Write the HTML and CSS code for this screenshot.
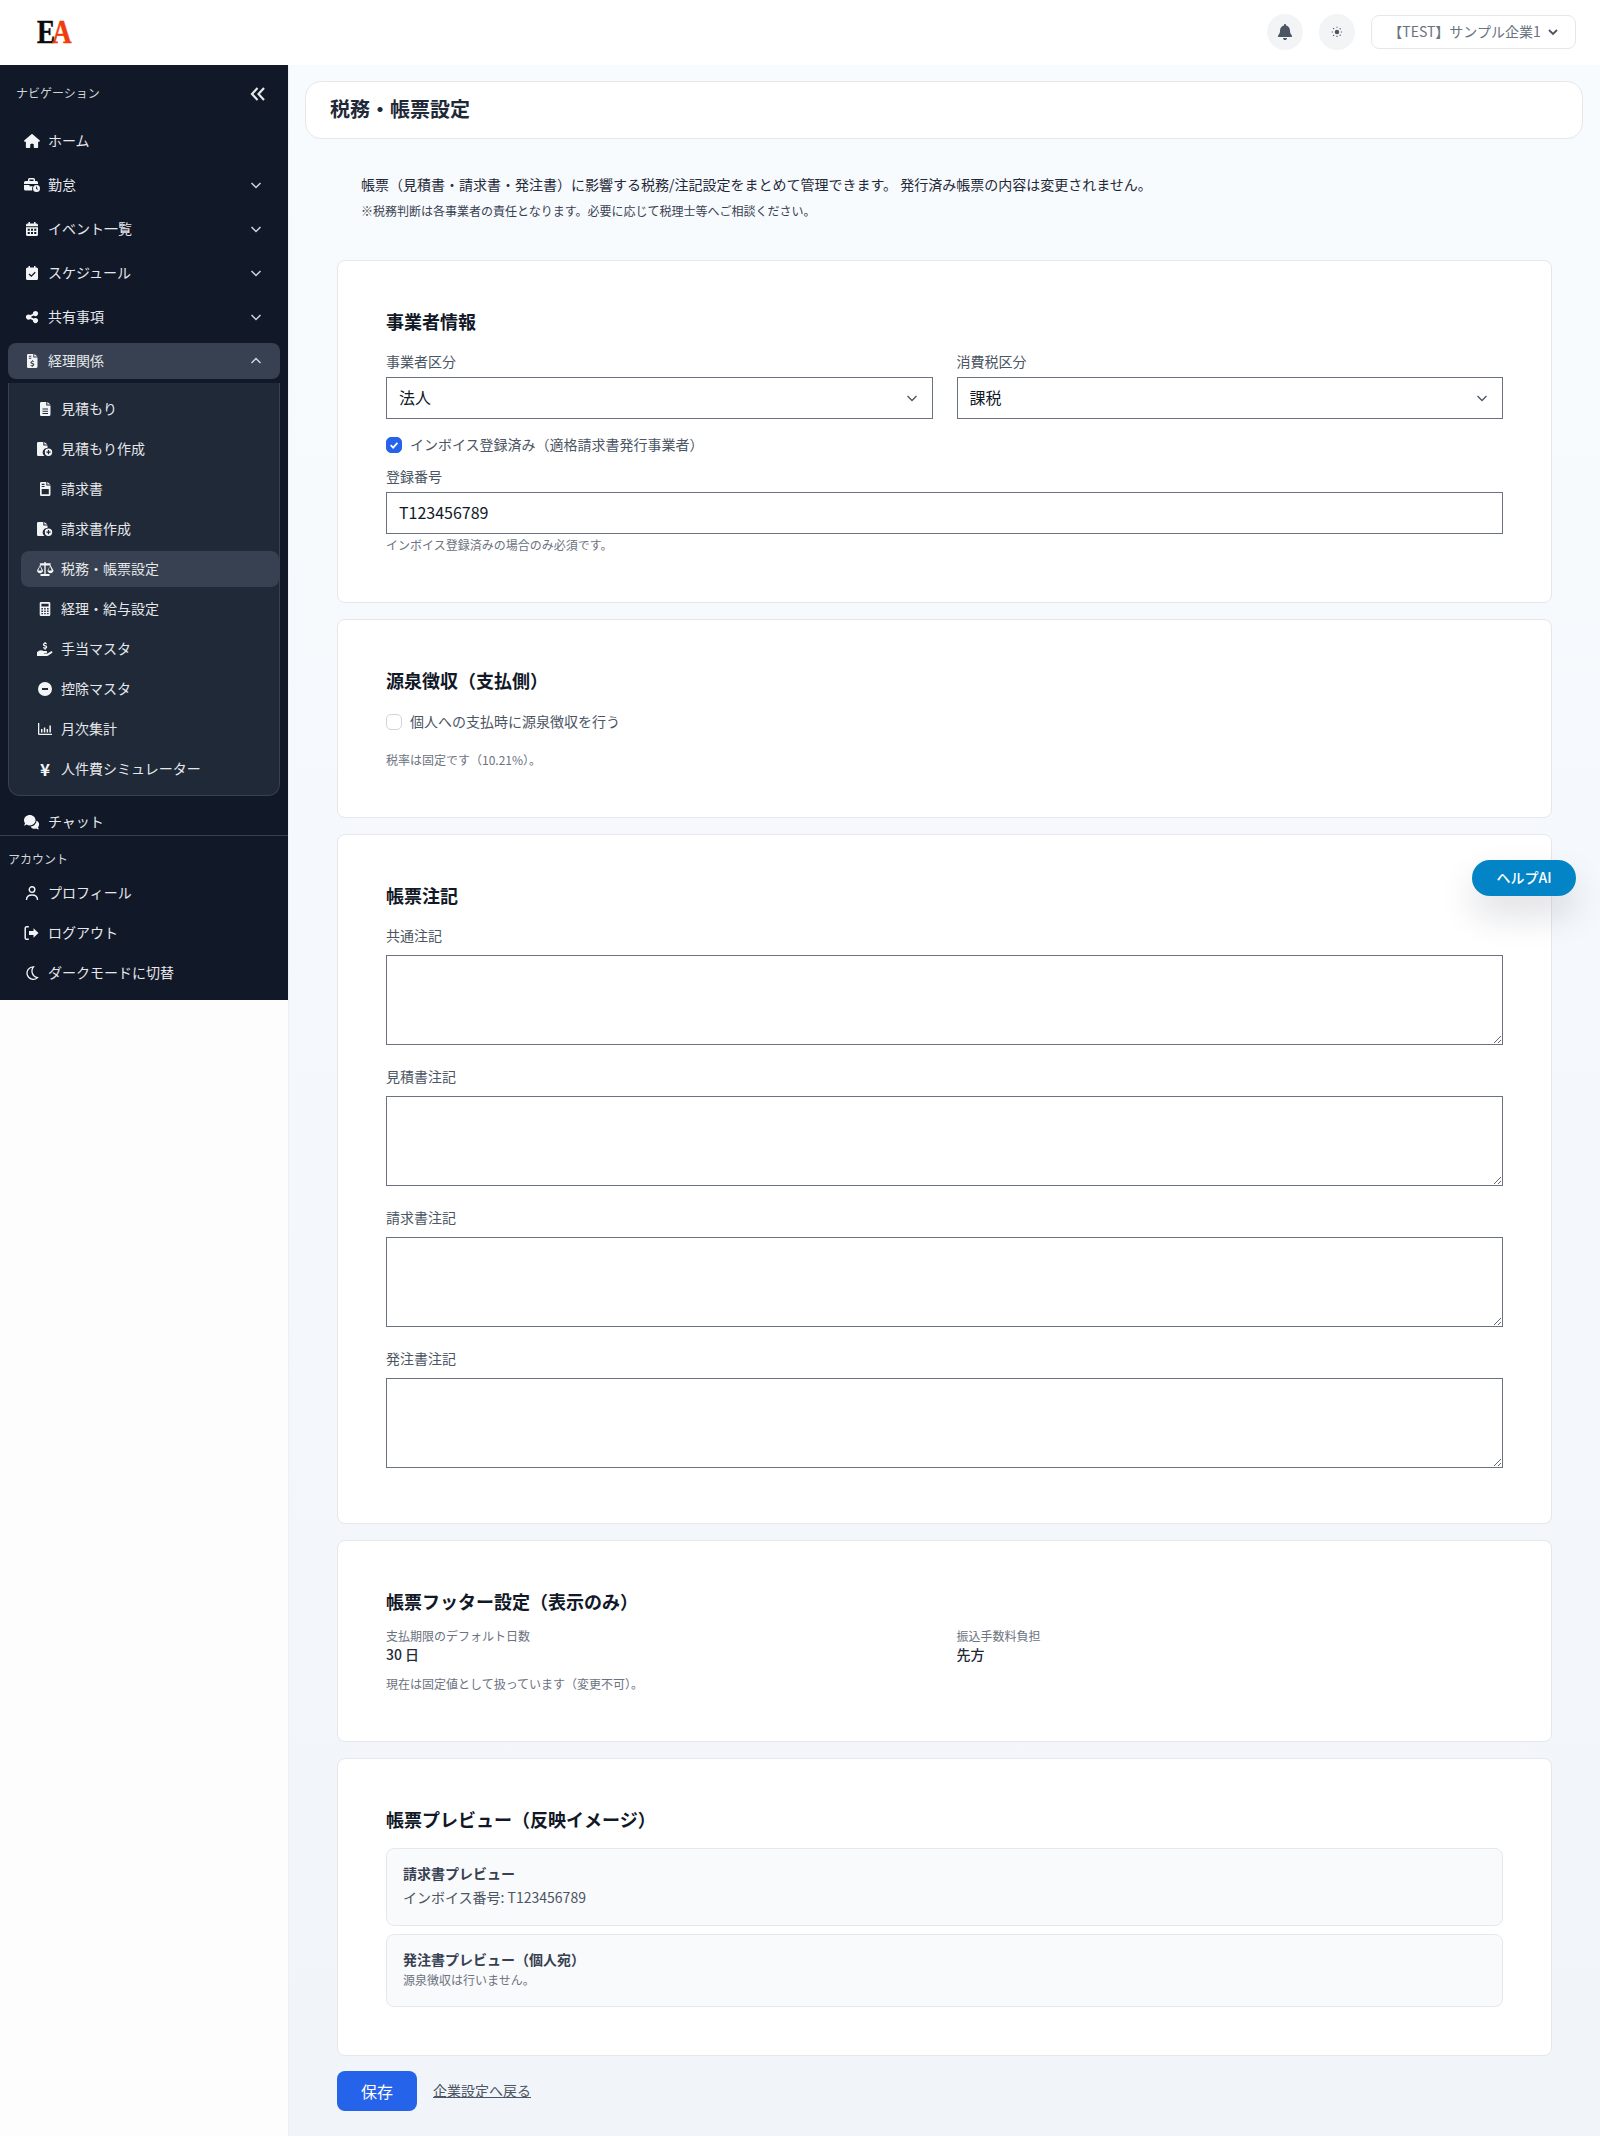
FILE: index.html
```html
<!DOCTYPE html>
<html lang="ja">
<head>
<meta charset="utf-8">
<title>税務・帳票設定</title>
<link rel="stylesheet" href="styles.css">
</head>
<body>
<svg class="defs" width="0" height="0" aria-hidden="true">
  <symbol id="i-house" viewBox="0 0 576 512"><path d="M575.8 255.5c0 18-15 32.1-32 32.1h-32l.7 160.2c0 2.7-.2 5.4-.5 8.1V472c0 22.1-17.9 40-40 40H456c-1.1 0-2.2 0-3.3-.1c-1.4 .1-2.8 .1-4.2 .1H416 392c-22.1 0-40-17.9-40-40V448 384c0-17.7-14.3-32-32-32H256c-17.7 0-32 14.3-32 32v64 24c0 22.1-17.9 40-40 40H160 128.1c-1.5 0-3-.1-4.5-.2c-1.2 .1-2.4 .2-3.6 .2H104c-22.1 0-40-17.9-40-40V360c0-.9 0-1.9 .1-2.8V287.6H32c-18 0-32-14-32-32.1c0-9 3-17 10-24L266.4 8c7-7 15-8 22-8s15 2 21 7L564.8 231.5c8 7 12 15 11 24z"/></symbol>
  <symbol id="i-bell" viewBox="0 0 448 512"><path d="M224 0c-17.7 0-32 14.3-32 32V51.2C119 66 64 130.6 64 208v18.8c0 47-17.3 92.4-48.5 127.6l-7.4 8.3c-8.4 9.4-10.4 22.9-5.3 34.4S19.4 416 32 416H416c12.6 0 24-7.4 29.2-18.9s3.1-25-5.3-34.4l-7.4-8.3C401.3 319.2 384 273.9 384 226.8V208c0-77.4-55-142-128-156.8V32c0-17.7-14.3-32-32-32zm45.3 493.3c12-12 18.7-28.3 18.7-45.3H224 160c0 17 6.7 33.3 18.7 45.3s28.3 18.7 45.3 18.7s33.3-6.7 45.3-18.7z"/></symbol>
  <symbol id="i-share" viewBox="0 0 448 512"><path d="M352 224c53 0 96-43 96-96s-43-96-96-96s-96 43-96 96c0 4 .2 8 .7 11.9l-94.1 47C145.4 170.2 121.9 160 96 160c-53 0-96 43-96 96s43 96 96 96c25.9 0 49.4-10.2 66.6-26.9l94.1 47c-.5 3.9-.7 7.8-.7 11.9c0 53 43 96 96 96s96-43 96-96s-43-96-96-96c-25.9 0-49.4 10.2-66.6 26.9l-94.1-47c.5-3.9 .7-7.8 .7-11.9s-.2-8-.7-11.9l94.1-47C302.6 213.8 326.1 224 352 224z"/></symbol>
  <symbol id="i-brief" viewBox="0 0 16 14"><path fill-rule="evenodd" d="M5.500 0h4A1.500 1.500 0 0 1 11 1.500V3h1.500A1.500 1.500 0 0 1 14 4.500V6H0V4.500A1.500 1.500 0 0 1 1.500 3H4V1.500A1.500 1.500 0 0 1 5.500 0zM5.500 1.500V3h4V1.500zM0 7h5.500v1.200h3.300A4.500 4.500 0 0 0 8.300 12.500H1.500A1.500 1.500 0 0 1 0 11z"/><path fill-rule="evenodd" d="M12.500 7a3.500 3.500 0 1 1 0 7 3.500 3.500 0 0 1 0-7zm-.5 1.500v2.200l1.600 1 .5-.7-1.200-.8V8.500z"/></symbol>
  <symbol id="i-cal" viewBox="0 0 16 14"><g transform="translate(2 0)"><path fill-rule="evenodd" d="M2.500 0h1.500v1.500h4V0h1.500v1.500h1A1.500 1.500 0 0 1 12 3v1.300H0V3a1.500 1.500 0 0 1 1.500-1.500h1zM0 5.300h12v7.200A1.500 1.500 0 0 1 10.500 14h-9A1.500 1.500 0 0 1 0 12.500zM1.700 6.800v1.900h2.100V6.800zm3.300 0v1.900h2V6.800zm3.200 0v1.900h2.100V6.800zM1.700 10v1.900h2.100V10zm3.300 0v1.900h2V10zm3.200 0v1.900h2.100V10z"/></g></symbol>
  <symbol id="i-calc" viewBox="0 0 16 14"><g transform="translate(2 0)"><path fill-rule="evenodd" d="M2.500 0h1.500v1.500h4V0h1.500v1.500h1A1.500 1.500 0 0 1 12 3v9.500a1.500 1.500 0 0 1-1.500 1.500h-9A1.500 1.500 0 0 1 0 12.500V3a1.500 1.500 0 0 1 1.500-1.500h1zM8.800 5.800 5.300 9.300 3.500 7.500l-.9.900 2.700 2.700 4.400-4.400z"/></g></symbol>
  <symbol id="i-filedollar" viewBox="0 0 16 14"><g transform="translate(3 0)"><path fill-rule="evenodd" d="M1.300 0H6.300v3.500h4.200v9A1.500 1.500 0 0 1 9 14H1.300A1.300 1.300 0 0 1 0 12.700V1.300A1.300 1.300 0 0 1 1.300 0zM7.300 0l3.200 2.600H7.300zM1.800 1.800v1h2.500v-1zM1.800 3.800v1h2.500v-1zM5.200 6v.9c-1.100.2-1.700.9-1.700 1.700 0 1 .8 1.300 1.700 1.600.7.200 1 .3 1 .6 0 .3-.4.5-1 .5-.5 0-1-.2-1.500-.4l-.3.900c.4.300.9.400 1.400.5v.8h.9v-.8c1-.2 1.600-.9 1.600-1.700 0-1-.8-1.400-1.700-1.700-.7-.2-1-.3-1-.6 0-.3.300-.5.900-.5.400 0 .9.100 1.200.3l.3-.9c-.3-.2-.7-.3-1.100-.3V6z"/></g></symbol>
  <symbol id="i-filelines" viewBox="0 0 16 14"><g transform="translate(3 0)"><path fill-rule="evenodd" d="M1.300 0H6.300v3.500h4.200v9A1.500 1.500 0 0 1 9 14H1.300A1.300 1.300 0 0 1 0 12.700V1.300A1.300 1.300 0 0 1 1.300 0zM7.300 0l3.200 2.600H7.300zM2.500 6.400v1h5.500v-1zm0 2.300v1h5.500v-1zm0 2.300v1h5.500v-1z"/></g></symbol>
  <symbol id="i-fileplus" viewBox="0 0 16 14"><path d="M1.300 0H6.300v3.500h4.200v2.400A4.500 4.500 0 0 0 7.500 14H1.300A1.300 1.300 0 0 1 0 12.700V1.300A1.300 1.300 0 0 1 1.300 0zM7.300 0l3.200 2.600H7.300z"/><path fill-rule="evenodd" d="M11.500 6.500a3.700 3.700 0 1 1 0 7.400 3.700 3.700 0 0 1 0-7.400zm-.6 1.600v1.500H9.400v1.200h1.500v1.500h1.200v-1.500h1.500V9.600h-1.500V8.100z"/></symbol>
  <symbol id="i-fileinv" viewBox="0 0 16 14"><g transform="translate(3 0)"><path fill-rule="evenodd" d="M1.300 0H6.300v3.500h4.200v9A1.500 1.500 0 0 1 9 14H1.300A1.300 1.300 0 0 1 0 12.700V1.300A1.300 1.300 0 0 1 1.300 0zM7.300 0l3.200 2.600H7.300zM1.700 7v5.300h7.100V7zM1.700 1.800v1.100h2.800V1.800zM1.700 3.900v1.100h2.800V3.900z"/></g></symbol>
  <symbol id="i-scale" viewBox="0 0 18 14"><path fill-rule="evenodd" d="M8.300 0h1.400v1.300h5v1.100h-.5l3.300 6.200c0 1.400-1.300 2.600-3 2.600s-3-1.200-3-2.600l2.600-5.200H9.700V12H13.500v2h-9v-2h3.800V3.400H4.400L7 8.600c0 1.400-1.300 2.600-3 2.600s-3-1.200-3-2.600l3.300-6.200h-.5V1.300h4.500zM4 4.200 2.200 8.400h3.600zm10 0-1.800 4.200h3.600z"/></symbol>
  <symbol id="i-calculator" viewBox="0 0 16 14"><g transform="translate(2.700 0)"><path fill-rule="evenodd" d="M1.300 0h8A1.300 1.300 0 0 1 10.600 1.300v11.400A1.300 1.300 0 0 1 9.300 14h-8A1.300 1.300 0 0 1 0 12.700V1.300A1.300 1.300 0 0 1 1.300 0zM1.700 1.800v2.700h7.200V1.800zm0 4.200v1.400h1.500V6zm2.800 0v1.400h1.500V6zm2.900 0v1.400h1.500V6zM1.700 8.500v1.400h1.500V8.500zm2.800 0v1.400h1.500V8.500zm2.900 0v1.400h1.500V8.500zM1.700 11v1.300h1.500V11zm2.800 0v1.300h1.500V11zm2.900 0v1.300h1.500V11z"/></g></symbol>
  <symbol id="i-hand" viewBox="0 0 16 14"><path d="M7.500 0h1.200v1c.5.100 1 .2 1.400.5l-.5 1c-.4-.3-1-.4-1.500-.4-.6 0-.9.200-.9.500 0 .4.300.5 1.100.7 1 .3 1.900.6 1.900 1.700 0 .9-.6 1.500-1.500 1.700v1H7.500V6.700c-.6-.1-1.100-.3-1.500-.6l.5-1c.4.300 1 .5 1.500.5.600 0 .9-.2.900-.5 0-.4-.3-.5-1.100-.7-1-.3-1.900-.6-1.900-1.600 0-.9.600-1.500 1.600-1.700z"/><path d="M0 10.200c1.300-1.300 2.600-2 4-2 .9 0 1.800.3 2.600.7h2.500c.6 0 1 .4 1 1s-.4 1-1 1H7v.7h3.500l3.300-2.200c.5-.3 1.100-.2 1.500.3.300.4.200 1-.3 1.400l-3.700 2.500c-.4.300-.8.400-1.300.4H0z"/></symbol>
  <symbol id="i-minus" viewBox="0 0 14 14"><path fill-rule="evenodd" d="M7 0a7 7 0 1 1 0 14A7 7 0 0 1 7 0zM4 6v2h6V6z"/></symbol>
  <symbol id="i-chart" viewBox="0 0 14 14"><path d="M0 1h1.300v10.700H14V13H1.300A1.300 1.300 0 0 1 0 11.700zM3 7h1.500v3.500H3zM5.800 5.500h1.500v5H5.800zM8.600 7h1.500v3.500H8.600zM11.400 3.500h1.500v7h-1.500z"/></symbol>
  <symbol id="i-chat" viewBox="0 0 18 14" preserveAspectRatio="none"><path d="M6.500 0C2.900 0 0 2.200 0 5c0 1.100.5 2.100 1.200 3-.3.700-.8 1.300-1.200 1.700 1.100 0 2.200-.3 2.900-.8 1 .5 2.200.8 3.600.8 3.600 0 6.500-2.200 6.500-4.800C13 2.200 10.100 0 6.500 0z"/><path d="M14 5.300c-.2 2.900-3 5.100-6.600 5.400.9 1.300 2.500 2.200 4.400 2.200.8 0 1.500-.1 2.100-.4.700.5 1.700.9 3 .9-.4-.5-.9-1.100-1.200-1.800.8-.8 1.300-1.800 1.300-2.900 0-1.600-1.100-2.900-3-3.400z"/></symbol>
  <symbol id="i-logout" viewBox="0 0 16 14"><path d="M4.800 .8H2.500A1.300 1.300 0 0 0 1.200 2.100v9.800a1.300 1.300 0 0 0 1.300 1.300h2.300" fill="none" stroke="currentColor" stroke-width="1.500"/><path d="M9.500 2.300 14.500 7 9.500 11.700V9H5V5h4.500z"/></symbol>
  <symbol id="i-user" viewBox="0 0 16 14"><circle cx="8" cy="3.600" r="2.800" fill="none" stroke="currentColor" stroke-width="1.400"/><path d="M2.500 14c0-3.200 2.300-5 5.500-5s5.500 1.800 5.500 5" fill="none" stroke="currentColor" stroke-width="1.400"/></symbol>
  <symbol id="i-moon" viewBox="0 0 16 14"><path d="M9.500 .9A6.200 6.200 0 1 0 13.500 11.600 6.600 6.600 0 0 1 9.500 .9z" fill="none" stroke="currentColor" stroke-width="1.300"/></symbol>
</svg>

<header class="topbar">
  <div class="logo"><span class="logo-e">E</span><span class="logo-a">A</span></div>
  <div class="top-actions">
    <button class="round-btn" type="button"><svg class="ic-bell"><use href="#i-bell"/></svg></button>
    <button class="round-btn" type="button">
      <svg class="ic-sun" viewBox="0 0 14 14"><circle cx="7" cy="7" r="2.600" fill="currentColor"/><path d="M7 .8v1.700M7 11.500v1.700M.8 7h1.700M11.500 7h1.700M2.600 2.600l1.200 1.200M10.200 10.200l1.200 1.200M2.600 11.400l1.200-1.200M10.200 3.800l1.200-1.200" stroke="currentColor" stroke-width="1.300" stroke-dasharray="1.300 .6" fill="none"/></svg>
    </button>
    <button class="company-btn" type="button"><span class="t">【TEST】サンプル企業1</span><svg class="ic-tiny" viewBox="0 0 12 12"><path d="M2 4l4 4 4-4" fill="none" stroke="currentColor" stroke-width="1.800"/></svg></button>
  </div>
</header>

<div class="shell">
  <div class="side-col">
    <aside class="sidebar">
      <div class="nav-area">
        <div class="nav-head">
          <span class="t-small">ナビゲーション</span>
          <svg class="ic-collapse" viewBox="0 0 16 16"><path d="M7.500 2 2 8l5.500 6M14 2 8.500 8l5.500 6" fill="none" stroke="currentColor" stroke-width="2.200"/></svg>
        </div>
        <ul class="nav-list">
          <li class="nav-item"><svg class="ic"><use href="#i-house"/></svg><span class="t">ホーム</span></li>
          <li class="nav-item"><svg class="ic"><use href="#i-brief"/></svg><span class="t">勤怠</span><svg class="chev" viewBox="0 0 12 12"><path d="M1.500 4 6 8.500 10.500 4"/></svg></li>
          <li class="nav-item"><svg class="ic"><use href="#i-cal"/></svg><span class="t">イベント一覧</span><svg class="chev" viewBox="0 0 12 12"><path d="M1.500 4 6 8.500 10.500 4"/></svg></li>
          <li class="nav-item"><svg class="ic"><use href="#i-calc"/></svg><span class="t">スケジュール</span><svg class="chev" viewBox="0 0 12 12"><path d="M1.500 4 6 8.500 10.500 4"/></svg></li>
          <li class="nav-item"><svg class="ic"><use href="#i-share"/></svg><span class="t">共有事項</span><svg class="chev" viewBox="0 0 12 12"><path d="M1.500 4 6 8.500 10.500 4"/></svg></li>
          <li class="nav-item is-open"><svg class="ic"><use href="#i-filedollar"/></svg><span class="t">経理関係</span><svg class="chev" viewBox="0 0 12 12"><path d="M1.500 8 6 3.500 10.500 8"/></svg></li>
          <li class="sub-panel">
            <ul class="sub-list">
              <li class="sub-item"><svg class="ic"><use href="#i-filelines"/></svg><span class="t">見積もり</span></li>
              <li class="sub-item"><svg class="ic"><use href="#i-fileplus"/></svg><span class="t">見積もり作成</span></li>
              <li class="sub-item"><svg class="ic"><use href="#i-fileinv"/></svg><span class="t">請求書</span></li>
              <li class="sub-item"><svg class="ic"><use href="#i-fileplus"/></svg><span class="t">請求書作成</span></li>
              <li class="sub-item is-active"><svg class="ic ic-wide"><use href="#i-scale"/></svg><span class="t">税務・帳票設定</span></li>
              <li class="sub-item"><svg class="ic"><use href="#i-calculator"/></svg><span class="t">経理・給与設定</span></li>
              <li class="sub-item"><svg class="ic"><use href="#i-hand"/></svg><span class="t">手当マスタ</span></li>
              <li class="sub-item"><svg class="ic"><use href="#i-minus"/></svg><span class="t">控除マスタ</span></li>
              <li class="sub-item"><svg class="ic"><use href="#i-chart"/></svg><span class="t">月次集計</span></li>
              <li class="sub-item"><span class="ic-yen">¥</span><span class="t">人件費シミュレーター</span></li>
            </ul>
          </li>
          <li class="nav-item"><svg class="ic ic-chat"><use href="#i-chat"/></svg><span class="t">チャット</span></li>
        </ul>
      </div>
      <div class="account">
        <div class="account-label t-small">アカウント</div>
        <ul class="account-list">
          <li class="acc-item"><svg class="ic"><use href="#i-user"/></svg><span class="t">プロフィール</span></li>
          <li class="acc-item"><svg class="ic"><use href="#i-logout"/></svg><span class="t">ログアウト</span></li>
          <li class="acc-item"><svg class="ic"><use href="#i-moon"/></svg><span class="t">ダークモードに切替</span></li>
        </ul>
      </div>
    </aside>
  </div>

  <main class="main">
    <div class="title-card"><h1>税務・帳票設定</h1></div>
    <div class="content">
      <div class="intro">
        <p class="intro-main t">帳票（見積書・請求書・発注書）に影響する税務/注記設定をまとめて管理できます。 発行済み帳票の内容は変更されません。</p>
        <p class="intro-sub t-small">※税務判断は各事業者の責任となります。必要に応じて税理士等へご相談ください。</p>
      </div>

      <section class="card">
        <h2>事業者情報</h2>
        <div class="two-col">
          <div>
            <label class="field-label t">事業者区分</label>
            <div class="select-wrap">
              <select class="control"><option>法人</option></select>
              <svg class="select-arrow" viewBox="0 0 12 12"><path d="M1.500 4 6 8.500 10.500 4"/></svg>
            </div>
          </div>
          <div>
            <label class="field-label t">消費税区分</label>
            <div class="select-wrap">
              <select class="control"><option>課税</option></select>
              <svg class="select-arrow" viewBox="0 0 12 12"><path d="M1.500 4 6 8.500 10.500 4"/></svg>
            </div>
          </div>
        </div>
        <div class="check-row check-row-a">
          <span class="check is-checked"><svg viewBox="0 0 16 16"><path d="M4.200 8.200 7 11l4.900-5.400" fill="none" stroke="#fff" stroke-width="2"/></svg></span>
          <span class="t">インボイス登録済み（適格請求書発行事業者）</span>
        </div>
        <label class="field-label-reg t">登録番号</label>
        <input class="control" type="text" value="T123456789">
        <p class="hint hint-reg t-small">インボイス登録済みの場合のみ必須です。</p>
      </section>

      <section class="card">
        <h2>源泉徴収（支払側）</h2>
        <div class="check-row">
          <span class="check"></span>
          <span class="t">個人への支払時に源泉徴収を行う</span>
        </div>
        <p class="hint hint-tax t-small">税率は固定です（10.21%）。</p>
      </section>

      <section class="card">
        <h2>帳票注記</h2>
        <div class="notes">
          <div><label class="field-label-note t">共通注記</label><textarea class="note"></textarea></div>
          <div><label class="field-label-note t">見積書注記</label><textarea class="note"></textarea></div>
          <div><label class="field-label-note t">請求書注記</label><textarea class="note"></textarea></div>
          <div><label class="field-label-note t">発注書注記</label><textarea class="note"></textarea></div>
        </div>
      </section>

      <section class="card">
        <h2 class="h2-footer">帳票フッター設定（表示のみ）</h2>
        <div class="two-col">
          <div><div class="meta-label t-small">支払期限のデフォルト日数</div><div class="meta-value t">30 日</div></div>
          <div><div class="meta-label t-small">振込手数料負担</div><div class="meta-value t">先方</div></div>
        </div>
        <p class="hint hint-footer t-small">現在は固定値として扱っています（変更不可）。</p>
      </section>

      <section class="card card-preview">
        <h2 class="h2-preview">帳票プレビュー（反映イメージ）</h2>
        <div class="preview">
          <div class="preview-title t">請求書プレビュー</div>
          <div class="preview-text t">インボイス番号: T123456789</div>
        </div>
        <div class="preview">
          <div class="preview-title t">発注書プレビュー（個人宛）</div>
          <div class="preview-sub t-small">源泉徴収は行いません。</div>
        </div>
      </section>

      <div class="actions">
        <button class="save" type="button">保存</button>
        <a class="back t" href="#">企業設定へ戻る</a>
      </div>
    </div>
  </main>
</div>

<button class="help-ai" type="button">ヘルプAI</button>
</body>
</html>
```

FILE: styles.css
```css
* { box-sizing: border-box; }
html, body { margin: 0; padding: 0; }
body {
  font-family: "Noto Sans CJK JP", "Noto Sans", sans-serif;
  font-size: 14px;
  line-height: 20px;
  color: #374151;
  background: #fff;
  min-height: 2136px;
}
ul { list-style: none; margin: 0; padding: 0; }
p, h1, h2 { margin: 0; }
button { font-family: inherit; cursor: pointer; }
.defs { position: absolute; }

/* Text boxes: the glyphs sit one pixel above the centre of their line. */
.t { display: block; line-height: 18px; padding-bottom: 2px; }
.t-small { display: block; font-size: 12px; line-height: 14px; padding-bottom: 2px; }

.topbar {
  height: 65px;
  background: #fff;
  display: flex;
  align-items: center;
  justify-content: space-between;
  padding: 0 24px 1px 37px;
}
.logo {
  font-family: "Liberation Serif", serif;
  font-weight: 700;
  font-size: 34px;
  line-height: 34px;
  display: flex;
  transform: scaleX(0.8);
  transform-origin: left center;
  -webkit-text-stroke: 0.5px currentColor;
}
.logo-e { color: #0a0a0a; }
.logo-a { color: #f13d0b; margin-left: -4px; }
.top-actions { display: flex; align-items: center; gap: 16px; }
.round-btn {
  width: 36px;
  height: 36px;
  border: 0;
  border-radius: 50%;
  background: #f3f4f6;
  color: #4b5563;
  display: flex;
  align-items: center;
  justify-content: center;
  padding: 0;
}
.ic-bell { width: 14px; height: 16px; fill: #4b5563; }
.ic-sun { width: 12px; height: 12px; }
.company-btn {
  height: 34px;
  width: 205px;
  border: 1px solid #e5e7eb;
  border-radius: 8px;
  background: #fff;
  color: #6b7280;
  font-size: 14px;
  display: flex;
  align-items: center;
  justify-content: center;
  gap: 6px;
  padding: 0 8px;
}
.ic-tiny { width: 12px; height: 12px; color: #4b5563; }

.shell { display: flex; align-items: stretch; min-height: 2071px; }
.side-col {
  width: 289px;
  flex: none;
  background: #fdfdfe;
  border-right: 1px solid #eceff3;
}
.sidebar {
  width: 288px;
  height: 935px;
  background: #111827;
  color: #e5e7eb;
}
.nav-area { height: 770px; overflow: hidden; }
.nav-head {
  height: 58px;
  padding: 0 22px 0 16px;
  display: flex;
  align-items: center;
  justify-content: space-between;
  color: #d1d5db;
}
.ic-collapse { width: 16px; height: 16px; color: #e5e7eb; }
.nav-list { padding: 0 8px; display: flex; flex-direction: column; gap: 8px; }
.nav-item, .acc-item {
  height: 36px;
  display: flex;
  align-items: center;
  gap: 8px;
  padding-left: 16px;
  padding-right: 18px;
  border-radius: 8px;
}
.nav-item.is-open { background: #374151; }
.ic { width: 16px; height: 14px; flex: none; fill: #f3f4f6; color: #f3f4f6; }
.ic-wide { width: 18px; margin: 0 -1px; }
.ic-chat { height: 15px; }
.chev {
  width: 12px;
  height: 12px;
  margin-left: auto;
  fill: none;
  stroke: #d1d5db;
  stroke-width: 1.500;
}
.sub-panel {
  margin-top: -4px;
  background: #1f2937;
  border: 1px solid #374151;
  border-top: 0;
  border-radius: 0 0 12px 12px;
  padding: 8px 0 8px 12px;
}
.sub-list { display: flex; flex-direction: column; gap: 4px; }
.sub-item {
  height: 36px;
  display: flex;
  align-items: center;
  gap: 8px;
  padding-left: 16px;
  border-radius: 8px;
}
.sub-item.is-active { background: #374151; }
.ic-yen {
  width: 16px;
  flex: none;
  text-align: center;
  font-size: 17px;
  line-height: 20px;
  font-weight: 700;
  color: #f3f4f6;
}

.account { border-top: 1px solid #374151; padding: 16px 0 0; }
.account-label { color: #d1d5db; padding-left: 8px; }
.account-list { padding: 7px 8px 0; display: flex; flex-direction: column; gap: 4px; }

.main {
  flex: 1;
  min-width: 0;
  padding: 16px 17px 25px 16px;
  background: linear-gradient(180deg, #f8fbfe 0%, #f1f4f9 100%);
}
.title-card {
  height: 58px;
  background: #fff;
  border: 1px solid #e5e7eb;
  border-radius: 16px;
  padding: 0 24px;
  display: flex;
  align-items: center;
}
h1 { font-size: 20px; line-height: 26px; padding-bottom: 2px; font-weight: 700; color: #1f2937; }
.content { padding: 0 31px 0 32px; }
.intro { padding: 36px 0 0 24px; height: 121px; }
.intro-main { color: #1f2937; }
.intro-sub { margin-top: 9px; color: #374151; }

.card {
  background: #fff;
  border: 1px solid #e5e7eb;
  border-radius: 8px;
  padding: 48px;
  margin-bottom: 16px;
}
h2 { font-size: 18px; line-height: 24px; padding-bottom: 4px; font-weight: 700; color: #111827; margin-bottom: 16px; }
.h2-footer { margin-bottom: 12px; }
.h2-preview { margin-bottom: 13px; }
.two-col { display: grid; grid-template-columns: 1fr 1fr; gap: 24px; }
.field-label { margin: -1px 0 5px; color: #4b5563; }
.field-label-reg { margin-bottom: 5px; color: #4b5563; }
.field-label-note { margin: -1px 0 9px; color: #4b5563; }

.control {
  display: block;
  width: 100%;
  height: 42px;
  border: 1px solid #6b7280;
  border-radius: 0;
  background: #fff;
  padding: 0 12px 2px;
  font-family: inherit;
  font-size: 16px;
  color: #111827;
  appearance: none;
  outline: none;
}
.select-wrap { position: relative; }
.select-arrow {
  position: absolute;
  right: 15px;
  top: 15px;
  width: 12px;
  height: 12px;
  fill: none;
  stroke: #4b5563;
  stroke-width: 1.300;
  pointer-events: none;
}
.check-row { display: flex; align-items: center; gap: 8px; color: #4b5563; }
.check-row-a { margin: 16px 0 12px; }
.check {
  width: 16px;
  height: 16px;
  border: 1px solid #d1d5db;
  border-radius: 5px;
  background: #fff;
  flex: none;
  display: block;
}
.check.is-checked { background: #2563eb; border-color: #2563eb; }
.check svg { display: block; width: 14px; height: 14px; }
.hint { color: #6b7280; }
.hint-reg { margin-top: 4px; }
.hint-tax { margin-top: 21px; }
.hint-footer { margin-top: 12px; }

.notes { display: flex; flex-direction: column; gap: 23px; padding-bottom: 7px; }
.note {
  display: block;
  width: 100%;
  height: 90px;
  border: 1px solid #6b7280;
  border-radius: 0;
  background: #fff;
  font-family: inherit;
  font-size: 16px;
  padding: 8px 12px;
  outline: none;
}
.meta-label { color: #6b7280; }
.meta-value { font-weight: 500; color: #1f2937; }

.preview {
  background: #f9fafb;
  border: 1px solid #e5e7eb;
  border-radius: 8px;
  padding: 15px 16px 17px;
}
.preview + .preview { margin-top: 8px; }
.preview-title { font-weight: 700; color: #374151; }
.preview-text { margin-top: 4px; color: #4b5563; }
.preview-sub { margin-top: 3px; color: #6b7280; }

.card-preview { margin-bottom: 15px; }
.actions { display: flex; align-items: center; gap: 16px; }
.save {
  width: 80px;
  height: 40px;
  border: 0;
  border-radius: 8px;
  background: #2563eb;
  color: #fff;
  font-size: 16px;
  padding: 0 0 1px;
}
.back { color: #4b5563; text-decoration: underline; }

.help-ai {
  position: absolute;
  left: 1472px;
  top: 860px;
  width: 104px;
  height: 36px;
  border: 0;
  border-radius: 18px;
  background: #0284c7;
  color: #fff;
  font-size: 14px;
  font-weight: 500;
  padding: 0 0 2px;
  box-shadow: 0 18px 36px rgba(15, 23, 42, .14);
}
```
